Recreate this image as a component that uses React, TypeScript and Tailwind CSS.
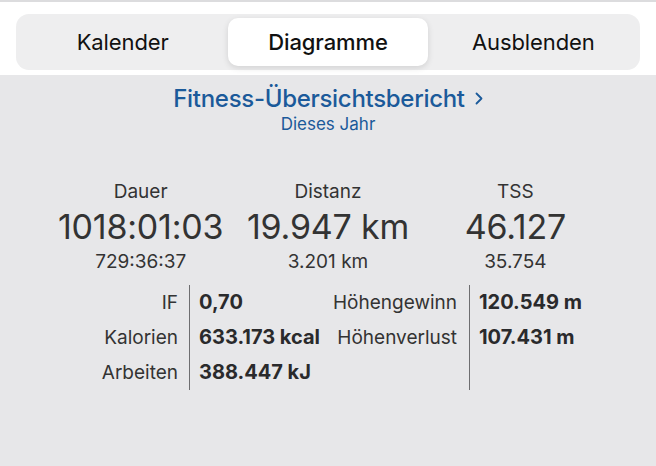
export default function App() {
  return (
    <div
      className="w-[656px] h-[466px] bg-[#e7e7e9] text-[#2c2c2e] overflow-hidden"
      style={{ fontFamily: 'Inter, "Noto Sans", sans-serif' }}
    >
      {/* top hairline */}
      <div className="h-[2px] bg-[#dcdcde]" />

      {/* SEGMENTED CONTROL */}
      <div className="bg-white pt-[12px] pb-[5px] px-4">
        <div className="h-[56px] rounded-[13px] bg-[#eeeeef] p-1 grid grid-cols-3 items-stretch text-[22px] tracking-[-0.1px]">
          <button className="flex items-center justify-center text-[#111]">Kalender</button>
          <button className="mx-[3px] flex items-center justify-center rounded-[10px] bg-white shadow-[0_2px_6px_rgba(0,0,0,0.12)] font-medium text-[#111]">
            Diagramme
          </button>
          <button className="flex items-center justify-center text-[#111]">Ausblenden</button>
        </div>
      </div>

      {/* REPORT HEADER */}
      <div className="pt-[9px] flex flex-col items-center text-[#1b5a9a]">
        <div className="flex items-center gap-[10px] text-[24px] leading-[29px] font-medium tracking-[-0.3px]">
          <span>Fitness-Übersichtsbericht</span>
          <svg width="8" height="13" viewBox="0 0 8 13" fill="none">
            <path d="M1.5 1.5L6.5 6.5L1.5 11.5" stroke="#1b5a9a" strokeWidth="1.8" strokeLinecap="round" strokeLinejoin="round" />
          </svg>
        </div>
        <div className="text-[17px] leading-[22px]">Dieses Jahr</div>
      </div>

      {/* MAIN STATS */}
      <div className="mt-[45px] px-[47px] grid grid-cols-3 text-center text-[#333]">
        {[
          ["Dauer", "1018:01:03", "729:36:37"],
          ["Distanz", "19.947 km", "3.201 km"],
          ["TSS", "46.127", "35.754"],
        ].map(([label, big, sub]) => (
          <div key={label} className="flex flex-col items-center">
            <div className="text-[19px] leading-[24px]">{label}</div>
            <div className="mt-[3px] text-[34px] leading-[40px] tracking-[-0.2px] whitespace-nowrap">{big}</div>
            <div className="mt-[3px] text-[19px] leading-[24px]">{sub}</div>
          </div>
        ))}
      </div>

      {/* DETAIL TABLE */}
      <div className="mt-[11px] flex text-[19px] leading-[35px] text-[#333]">
        <div className="w-[178px] text-right">
          <div>IF</div>
          <div>Kalorien</div>
          <div>Arbeiten</div>
        </div>
        <div className="ml-[11px] w-[140px] border-l border-[#6e6e70] pl-[9px] text-[20px] font-bold text-[#2a2a2c]">
          <div>0,70</div>
          <div className="whitespace-nowrap">633.173 kcal</div>
          <div>388.447 kJ</div>
        </div>
        <div className="w-[128px] text-right">
          <div>Höhengewinn</div>
          <div>Höhenverlust</div>
          <div>&nbsp;</div>
        </div>
        <div className="ml-[12px] border-l border-[#6e6e70] pl-[9px] text-[20px] font-bold text-[#2a2a2c]">
          <div>120.549 m</div>
          <div>107.431 m</div>
          <div>&nbsp;</div>
        </div>
      </div>
    </div>
  );
}
